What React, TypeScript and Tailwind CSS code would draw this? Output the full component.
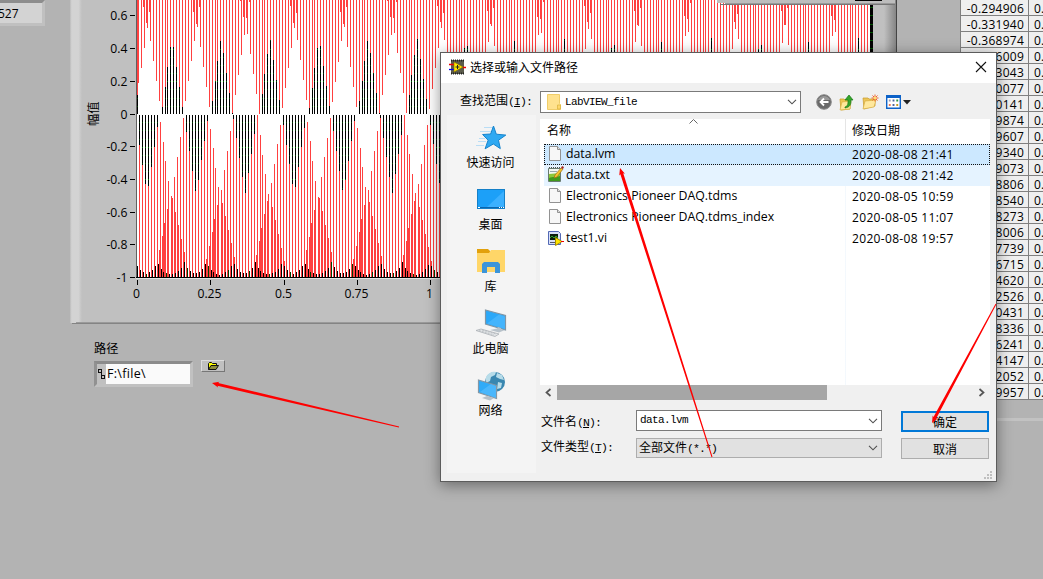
import React from "react";

const PITCH = 2.94;
const PERIOD = 49.02;
const RED = "#ff4040";

const distanceTo = (x: number, origin: number) => {
  const m = (((x - origin) % PERIOD) + PERIOD) % PERIOD;
  return Math.min(m, PERIOD - m);
};

type Bar = { x: number; y: number; w: number; h: number; fill: string };

function buildBars(): Bar[] {
  const bars: Bar[] = [];
  const add = (x: number, y0: number, y1: number, fill: string, w = 1) => {
    const a = Math.round(y0);
    const b = Math.round(y1);
    if (b > a) bars.push({ x, y: a, w, h: b - a, fill });
  };
  const addBlack = (x: number, y0: number, y1: number) => {
    add(x, y0, y1, "#000");
    for (let n = -13; n < 20; n++) {
      const y = Math.round(114 - n * 8.17);
      if (y > y0 && y < y1 - 1) add(x, y, y + 1, n % 4 === 0 ? "#007000" : "#003c00");
    }
  };
  add(137, 0, 95, RED, 1);
  add(138, 0, 83, RED, 1);
  addBlack(137, 95, 114);
  for (let k = 0; k < 248; k++) {
    const fx = 141.5 + PITCH * k;
    const x = Math.floor(fx);
    if (x > 868) break;
    const d = distanceTo(fx, 147.9);
    const t = 24 + 6.82 * d;
    const end = Math.min(t, 228 - t);
    add(x, 0, end, RED);
    if (t > 114) addBlack(x, end, 114);
    const wide = 26 - 5.6 * d;
    if (wide > 0) add(x - 1, 0, wide, RED);
  }
  for (let k = 0; k < 248; k++) {
    const fx = 139.5 + PITCH * k;
    const x = Math.floor(fx);
    if (x > 868) break;
    const t = 195 - 6.67 * distanceTo(fx, 147);
    if (t > 115) {
      addBlack(x, 115, t);
      add(x, t, 277, RED);
    } else {
      add(x, 230 - t, 277, RED);
    }
    const d = distanceTo(fx, 171.6);
    const s = 197 + 4.6 * d;
    if (s < 262) {
      const right = distanceTo(fx + 1, 171.6) > d;
      add(right ? x + 1 : x - 1, s, 277, RED);
    }
  }
  for (let k = 0; k < 248; k++) {
    const fx = 137.5 + PITCH * k;
    const d = Math.min(distanceTo(fx, 157), distanceTo(fx, 184.6));
    add(Math.floor(fx), 276 - 14 * Math.pow(0.86, d * 1.15), 277, k % 7 === 3 ? "#003c00" : "#000");
  }
  return bars;
}

const BARS = buildBars();

const Y_TICKS: [string, number][] = [
  ["0.6", 15], ["0.4", 48], ["0.2", 81], ["0", 114], ["-0.2", 146],
  ["-0.4", 179], ["-0.6", 212], ["-0.8", 244], ["-1", 277],
];
const X_TICKS: [string, number][] = [["0", 137], ["0.25", 210], ["0.5", 284], ["0.75", 357], ["1", 430]];

function Chart() {
  return (
    <svg width="827" height="324" viewBox="70 0 827 324" shapeRendering="crispEdges" className="block">
      <defs>
        <linearGradient id="bevelL"><stop offset="0" stopColor="#bcbcbc" /><stop offset=".15" stopColor="#d3d3d3" /><stop offset=".7" stopColor="#d3d3d3" /><stop offset="1" stopColor="#c0c0c0" /></linearGradient>
        <linearGradient id="bevelR"><stop offset="0" stopColor="#c0c0c0" /><stop offset="1" stopColor="#858585" /></linearGradient>
      </defs>
      <rect x="70" y="0" width="827" height="322" fill="#c0c0c0" />
      <rect x="70" y="0" width="12" height="323" fill="url(#bevelL)" />
      <rect x="884" y="0" width="12" height="323" fill="url(#bevelR)" />
      <rect x="896" y="0" width="1" height="323" fill="#444" />
      <rect x="76" y="322" width="821" height="1" fill="#9a9a9a" />
      <rect x="72" y="323" width="825" height="1" fill="#848484" />
      <rect x="136" y="0" width="1" height="278" fill="#606060" />
      <rect x="137" y="0" width="733" height="277" fill="#fff" />
      {BARS.map((b, i) => (
        <rect key={i} x={b.x} y={b.y} width={b.w} height={b.h} fill={b.fill} />
      ))}
      <rect x="870" y="0" width="3" height="277" fill="#000" />
      {[7, 15, 24, 32, 40, 48].map((y) => <rect key={y} x="870" y={y} width="3" height="1" fill="#005000" />)}
      <rect x="136" y="277" width="737" height="1" fill="#000" />
      <rect x="136" y="278" width="737" height="1" fill="#e2e2e2" />
      {Y_TICKS.map(([label, y]) => (
        <g key={label}>
          <rect x="130" y={y} width="5" height="1" fill="#000" />
          <text x="127.5" y={y + 5} textAnchor="end" fontSize="12.2" fontFamily="Open Sans, sans-serif">{label}</text>
        </g>
      ))}
      {X_TICKS.map(([label, x]) => (
        <g key={label}>
          <rect x={x} y="280" width="1" height="5" fill="#000" />
          <text x={x - 0.5} y="298" textAnchor="middle" fontSize="12.2" fontFamily="Open Sans, sans-serif">{label}</text>
        </g>
      ))}
      <text transform="translate(98 126) rotate(-90)" fontSize="12.2" fontFamily="Noto Sans CJK SC, sans-serif">幅值</text>
      <rect x="717" y="0" width="178" height="3" fill="#bdbdbd" />
      <rect x="725" y="3" width="170" height="1" fill="#999" />
      <rect x="720" y="4" width="175" height="1" fill="#777" />
      <rect x="855" y="0" width="27" height="1" fill="#000" />
    </svg>
  );
}

const TABLE = [
  "-0.294906", "-0.331940", "-0.368974", "-0.406009", "-0.443043", "-0.480077", "-0.510141", "-0.529874", "-0.549607",
  "-0.569340", "-0.589073", "-0.608806", "-0.628540", "-0.648273", "-0.668006", "-0.687739", "-0.706715", "-0.724620",
  "-0.742526", "-0.760431", "-0.778336", "-0.796241", "-0.814147", "-0.832052", "-0.849957",
];

function DataTable() {
  return (
    <div className="flex w-[84px] flex-col">
      <div className="flex flex-col border-l border-l-[#808080] bg-[#efefef]">
        {TABLE.map((v) => (
          <div key={v} className="flex h-4 border-b border-[#808080] text-[12px] leading-[18px] tracking-[0.25px]">
            <div className="w-[68px] shrink-0 border-r border-[#808080] pr-[4px] text-right">{v}</div>
            <div className="pl-[5px]">0.</div>
          </div>
        ))}
      </div>
      <div className="mt-[18px] h-[3px] bg-[#c2c2c2]" />
    </div>
  );
}

function PathControl() {
  return (
    <div className="flex pl-[24px] pt-[17px]">
      <div className="flex w-[99px] flex-col">
        <span className="h-[20px] font-['Noto_Sans_CJK_SC',sans-serif] text-[12.2px] leading-[14px]">路径</span>
        <div className="flex h-[26px] border-[3px] border-b-[#c1c1c1] border-l-[#919191] border-r-[#c1c1c1] border-t-[#8b8b8b] bg-[#fafafa]">
          <div className="flex w-[9px] items-center justify-center bg-[#c0c0c0]">
            <svg width="7" height="11" viewBox="0 0 7 11" fill="none" stroke="#111" shapeRendering="crispEdges"><path d="M.5 .5h3v3h-3zM3.5 3.5v5M3.5 6.5h3v3h-3z" /></svg>
          </div>
          <span className="pl-px text-[12.5px] leading-[20px] tracking-[0.3px]">F:\file\</span>
        </div>
      </div>
      <div className="ml-[8px] mt-[19px] flex h-[12px] w-[24px] items-center justify-center border border-b-[#777] border-l-[#ddd] border-r-[#777] border-t-[#ddd] bg-[#c0c0c0]">
        <svg width="11" height="8" viewBox="0 0 11 8"><path d="M.5 7.5V1.5l1-1h2l1 1h4v2" fill="#ffff00" stroke="#111" /><path d="M.5 7.5l2.5-4h7.5l-2.5 4z" fill="#8c8c3c" stroke="#111" /></svg>
      </div>
    </div>
  );
}

const Chevron = () => (
  <svg width="10" height="6" viewBox="0 0 10 6" fill="none" stroke="#505050" strokeWidth="1.1"><path d="M1 .8l4 4 4-4" /></svg>
);

const StarIcon = () => (
  <svg width="32" height="32" viewBox="0 0 32 32">
    <path d="M9 6.500h10M5 10.500h11M3 20.500h8M1 24.500h8M4 17.500h6" stroke="#b9ddf5" strokeWidth="1" />
    <path d="M18.500 5l2.800 8.200 9.500.9-7.300 5.100 1.800 8.400-7-4.600-8.200 4.800 3-8.600-5.500-5.700 8-.5z" fill="#2fa9f2" stroke="#1583cc" />
  </svg>
);
const DesktopIcon = () => (
  <svg width="32" height="32" viewBox="0 0 32 32">
    <rect x="2.500" y="6.500" width="27" height="19" fill="#1ca0f8" stroke="#1580c8" />
    <path d="M12 24L29 8v16z" fill="#3bb0ff" /><path d="M3 24.500h26" stroke="#0b65ad" /><path d="M3 24.500h2M24 24.500h1M26 24.500h1M28 24.500h1" stroke="#fff" />
  </svg>
);
const LibraryIcon = () => (
  <svg width="32" height="32" viewBox="0 0 32 32">
    <path d="M2 4h11l2 2v4H2z" fill="#e2a10c" /><path d="M2 8h12l2-3h14v22H2z" fill="#ffd668" />
    <path d="M7 28V19l2-2h14l2 2v9h-5v-6h-8v6z" fill="#3c95da" />
  </svg>
);
const ComputerIcon = () => (
  <svg width="32" height="32" viewBox="0 0 32 32">
    <path d="M10.500 3l20 5.500v14.500l-20-6z" fill="#2ba8f8" stroke="#8095a5" strokeWidth="1.2" /><path d="M12 16.500L24 7.500l6 2v12.500z" fill="#55bcff" opacity=".6" />
    <path d="M15 23l7-1.500 1-1.500 3 1v1.500l4 .5-6 2.500z" fill="#b8c2ca" /><path d="M1 23.500l5-1.500 18 5-4 2.500z" fill="#e3e6e8" stroke="#a9afb4" strokeWidth=".8" /><path d="M4 23.500l15 4.500M7 23l14 4" stroke="#a9afb4" strokeWidth=".6" strokeDasharray="2 1" />
  </svg>
);
const NetworkIcon = () => (
  <svg width="32" height="32" viewBox="0 0 32 32">
    <circle cx="20" cy="13" r="10" fill="#3987b0" /><path d="M11 8c2-4 6-6 10-5l-1 3-4 2-1 4-4 2zM22 4l5 2 2 5-4-1-4-2zM23 13l4 1-1 5-4 1z" fill="#b7dce9" />
    <path d="M3.500 11l18 5.500v13l-18-6z" fill="#2fabf8" stroke="#8497a5" strokeWidth="1.200" /><path d="M5 23l11-8 5 2v12z" fill="#5ec0ff" opacity=".6" /><path d="M7 29l5-2 7 2-4 2.500z" fill="#b6c0c8" />
  </svg>
);

const PLACES = [
  { label: "快速访问", icon: <StarIcon /> },
  { label: "桌面", icon: <DesktopIcon /> },
  { label: "库", icon: <LibraryIcon /> },
  { label: "此电脑", icon: <ComputerIcon /> },
  { label: "网络", icon: <NetworkIcon /> },
];

const PageIcon = () => (
  <svg width="16" height="17" viewBox="0 0 16 17"><path d="M2.500 1.500h8l3 3v11h-11z" fill="#f7f7f7" stroke="#929292" /><path d="M10.500 1.500v3h3" fill="#ddd" stroke="#929292" /></svg>
);
const NoteIcon = () => (
  <svg width="17" height="17" viewBox="0 0 17 17">
    <path d="M1.500 2.500h12v13h-12z" fill="#f3f7f0" stroke="#687b70" /><path d="M2 1.500h11" stroke="#555" strokeDasharray="1 1" /><path d="M3 5.500h7" stroke="#9aa" />
    <path d="M2 8l11-1v8H2z" fill="#8cc838" /><path d="M2 12c4-2 6 0 11-2v5H2z" fill="#3f9a1c" />
    <path d="M7 12l1-3 6-7 2 1-6 8z" fill="#f6c32c" stroke="#9a6c17" strokeWidth=".7" /><path d="M14 2l1-2 2 1-1 2z" fill="#a32727" />
  </svg>
);
const ViIcon = () => (
  <svg width="17" height="16" viewBox="0 0 17 16">
    <path d="M1.500 1.500h10l2 2v11h-12z" fill="#d8e0f8" stroke="#5369b5" /><rect x="3" y="4" width="8" height="6" fill="#0d1d0d" /><path d="M3 8l2-2 2 2 2-2 2 2" stroke="#2ba32b" fill="none" />
    <path d="M3 12.500h6" stroke="#556" /><path d="M8.500 7.500l6.500 4-6.500 4z" fill="#ffe500" stroke="#a68a00" /><path d="M14 11.500h3" stroke="#e00" />
  </svg>
);

const FILES = [
  { name: "data.lvm", date: "2020-08-08 21:41", icon: <PageIcon />, row: "bg-[#cce8ff] outline-1 -outline-offset-1 outline-dotted outline-[#111]" },
  { name: "data.txt", date: "2020-08-08 21:42", icon: <NoteIcon />, row: "bg-[#e5f3ff]" },
  { name: "Electronics Pioneer DAQ.tdms", date: "2020-08-05 10:59", icon: <PageIcon />, row: "" },
  { name: "Electronics Pioneer DAQ.tdms_index", date: "2020-08-05 11:07", icon: <PageIcon />, row: "" },
  { name: "test1.vi", date: "2020-08-08 19:57", icon: <ViIcon />, row: "" },
];

function Toolbar() {
  return (
    <div className="ml-[15px] flex items-center">
      <svg width="16" height="16" viewBox="0 0 16 16"><circle cx="8" cy="8" r="7.300" fill="#6a6a6a" stroke="#8a8a8a" /><path d="M2 6a6.500 6.500 0 0 1 12 0z" fill="#999" /><path d="M12.500 8H5M8 4.500L4.500 8 8 11.500" stroke="#fff" strokeWidth="1.800" fill="none" /></svg>
      <svg width="16" height="17" viewBox="0 0 16 17" className="ml-[7px]"><path d="M1 5h4l1 1h5v9l-9 1z" fill="#edc64f" stroke="#cfa22b" strokeWidth=".8" /><path d="M1 16l2-8 9-1-1 8z" fill="#ffe89a" stroke="#d4aa3c" strokeWidth=".6" /><path d="M6 13c3-1 3-3 3-7H6l4-5 4 5h-2c0 5-1 7-6 8z" fill="#35a52b" stroke="#187915" strokeWidth=".7" /></svg>
      <svg width="17" height="16" viewBox="0 0 17 16" className="ml-[7px]"><path d="M1 4h5l1 1h6v7l-11 3z" fill="#ecc557" stroke="#c89b2d" strokeWidth=".7" /><path d="M1 15l2-8 11-1-2 7z" fill="#ffe89d" stroke="#d1a638" strokeWidth=".6" /><path d="M13 .5v7M9.500 4h7M10.500 1.500l5 5M15.500 1.500l-5 5" stroke="#ef642e" /><circle cx="13" cy="4" r="1.300" fill="#ffe36e" /></svg>
      <svg width="15" height="14" viewBox="0 0 16 14" preserveAspectRatio="none" className="ml-[7px]"><rect x=".75" y=".75" width="14.500" height="12.500" fill="#fff" stroke="#0c62c8" strokeWidth="1.500" /><path d="M0 1.500h16" stroke="#0c62c8" strokeWidth="3" /><path d="M3 5.500h2" stroke="#999db8" strokeWidth="2" /><path d="M3 10h2" stroke="#f07850" strokeWidth="2" /><path d="M7 5.500h2M7 10h2" stroke="#4c659e" strokeWidth="2" /><path d="M11 5.500h2" stroke="#229447" strokeWidth="2" /><path d="M11 10h2" stroke="#c29e20" strokeWidth="2" /></svg>
      <svg width="8" height="5" viewBox="0 0 8 5" className="ml-[2px]"><path d="M0 0h8L4 4.500z" fill="#222" /></svg>
    </div>
  );
}

const MONO = "font-['Liberation_Mono',monospace] text-[11.5px] tracking-[-0.9px]";

function FileDialog() {
  return (
    <div className="absolute left-[440px] top-[52px] flex h-[430px] w-[557px] flex-col border border-[#5c5c5c] bg-[#f0f0f0] font-['Noto_Sans_CJK_SC',sans-serif] text-[12px] shadow-[0_3px_14px_rgba(0,0,0,0.42)]">
      <div className="flex h-[30px] shrink-0 items-center bg-white pl-[8px] pr-[9px]">
        <svg width="17" height="16" viewBox="0 0 17 16" className="-mt-[3px]"><rect x="2" y="1" width="13" height="14" fill="#5c5c4c" /><path d="M2 1.500h13M2 14.500h13" stroke="#222" strokeWidth="2" strokeDasharray="1 1" /><path d="M0 5.500h5M14 8.500h3" stroke="#e00" strokeWidth="1.300" /><path d="M0 10.500h5" stroke="#00e" strokeWidth="1.300" /><path d="M5 3l9 5-9 5z" fill="#ffe600" stroke="#886a00" strokeWidth=".6" /><path d="M6.500 8h4M8.500 6v4" stroke="#222" /></svg>
        <span className="-mt-[2px] ml-[4px] text-[12px] leading-[18px]">选择或输入文件路径</span>
        <svg width="12" height="12" viewBox="0 0 12 12" className="-mt-[2px] ml-auto" stroke="#111" strokeWidth="1.100"><path d="M1 1l10 10M11 1L1 11" /></svg>
      </div>
      <div className="flex h-[35px] shrink-0 items-center pl-[19px] pt-[3px]">
        <div className="-mt-[3px] w-[80px] leading-[18px]">查找范围<span className={MONO}>(<u>I</u>):</span></div>
        <div className="flex h-[22px] w-[261px] items-center border border-[#7a7a7a] bg-white pl-[6px] pr-[3px]">
          <svg width="14" height="16" viewBox="0 0 14 16"><path d="M.5.500h12v9l1 1v5H.5z" fill="#ffe28e" stroke="#f0cd69" /><path d="M10.500 15v-4h3v4z" fill="#ffd76b" stroke="#d9b13c" strokeWidth=".7" /></svg>
          <span className="ml-[4px] font-['Liberation_Mono',monospace] text-[11px] tracking-[-0.6px]">LabVIEW_file</span>
          <div className="ml-auto"><Chevron /></div>
        </div>
        <Toolbar />
      </div>
      <div className="flex min-h-0 grow">
        <div className="ml-[6px] flex h-[358px] w-[89px] shrink-0 -translate-y-[3px] flex-col bg-[#f4f4f4] pr-[2px] pt-[6px]">
          {PLACES.map((p) => (
            <div key={p.label} className="flex h-[62px] shrink-0 flex-col items-center">
              {p.icon}
              <span className="mt-[1px] leading-[16px]">{p.label}</span>
            </div>
          ))}
        </div>
        <div className="ml-[4px] flex w-[450px] flex-col">
          <div className="mt-px flex h-[266px] shrink-0 flex-col bg-white">
            <div className="flex h-[25px] shrink-0">
              <div className="flex w-[306px] border-r border-[#e5e5e5] pl-[7px] leading-[22px]">
                名称
                <svg width="9" height="5" viewBox="0 0 9 5" className="ml-[118px]" fill="none" stroke="#666"><path d="M.5 4.500l4-4 4 4" /></svg>
              </div>
              <span className="pl-[6px] leading-[22px]">修改日期</span>
            </div>
            <div className="flex grow flex-col bg-linear-to-r from-transparent from-[305px] via-[#e8f2fb] via-[305px] to-transparent to-[306px] font-['Open_Sans',sans-serif]">
              {FILES.map((f) => (
                <div key={f.name} className={`ml-[4px] flex h-[21px] items-center ${f.row}`}>
                  <div className="ml-[3px] w-[18px] -translate-y-px">{f.icon}</div>
                  <span className="w-[284px] whitespace-nowrap pl-px text-[12.3px]">{f.name}</span>
                  <span className="whitespace-nowrap pl-[3px] text-[12px] tracking-[0.33px]">{f.date}</span>
                </div>
              ))}
            </div>
          </div>
          <div className="flex h-[15px] shrink-0 items-center">
            <svg width="17" height="9" viewBox="0 0 17 9" fill="none" stroke="#555" strokeWidth="1.700"><path d="M10.500 1L6.500 4.500l4 3.500" /></svg>
            <div className="h-[15px] w-[270px] bg-[#a6a6a6]" />
            <svg width="17" height="9" viewBox="0 0 17 9" fill="none" stroke="#555" strokeWidth="1.700" className="ml-auto"><path d="M6.500 1l4 3.500-4 3.500" /></svg>
          </div>
          <div className="mt-[9px] flex">
            <div className="flex w-[96px] flex-col gap-[6px] pl-[1px]">
              <span className="h-[21px] pt-[2px] leading-[20px]">文件名<span className={MONO}>(<u>N</u>):</span></span>
              <span className="h-[21px] leading-[20px]">文件类型<span className={MONO}>(<u>T</u>):</span></span>
            </div>
            <div className="flex w-[246px] flex-col gap-[7px] pt-px">
              <div className="flex h-[21px] items-center border border-[#7a7a7a] bg-white pl-[3px] pr-[3px]">
                <span className="font-['Liberation_Mono',monospace] text-[11px] tracking-[-0.6px]">data.lvm</span>
                <div className="ml-auto"><Chevron /></div>
              </div>
              <div className="flex h-[20px] items-center border border-[#adadad] bg-[#e1e1e1] pl-[2px] pr-[3px]">
                <span>全部文件<span className={MONO}>(*.*)</span></span>
                <div className="ml-auto"><Chevron /></div>
              </div>
            </div>
            <div className="ml-[19px] flex w-[88px] flex-col gap-[6px] pt-[2px]">
              <button className="h-[21px] border-2 border-[#0078d7] bg-[#e1e1e1] leading-[16px]">确定</button>
              <button className="h-[21px] border border-[#adadad] bg-[#e1e1e1] leading-[18px]">取消</button>
            </div>
          </div>
        </div>
      </div>
      <svg width="9" height="9" viewBox="0 0 9 9" className="absolute bottom-px right-[3px]" fill="#bfbfbf"><path d="M6 0h2v2H6zM3 3h2v2H3zM6 3h2v2H6zM0 6h2v2H0zM3 6h2v2H3zM6 6h2v2H6z" /></svg>
    </div>
  );
}

function Arrow({ tip, tail }: { tip: [number, number]; tail: [number, number] }) {
  const dx = tail[0] - tip[0];
  const dy = tail[1] - tip[1];
  const len = Math.hypot(dx, dy);
  const at = (along: number, side: number) =>
    `${tip[0] + (dx / len) * along - (dy / len) * side},${tip[1] + (dy / len) * along + (dx / len) * side}`;
  const points = [at(0, 0), at(7, 3), at(6, 1.5), at(len, 0.5), at(len, -0.5), at(6, -1.5), at(7, -3)].join(" ");
  return <polygon points={points} fill="#fe0000" />;
}

export default function App() {
  return (
    <div className="relative flex h-[579px] w-[1043px] overflow-hidden bg-[#b3b3b3] font-['Open_Sans',sans-serif] text-black">
      <div className="w-[70px] shrink-0">
        <div className="h-[26px] w-[45px] border-b-[3px] border-r-[3px] border-t-[3px] border-b-[#c0c0c0] border-r-[#c0c0c0] border-t-[#8d8d8d] bg-[#d3d3d3] text-[12px] leading-[21px]"><span className="-ml-[2px]">527</span></div>
      </div>
      <div className="flex w-[827px] shrink-0 flex-col">
        <Chart />
        <PathControl />
      </div>
      <div className="ml-[63px] shrink-0"><DataTable /></div>
      <FileDialog />
      <svg width="1043" height="579" viewBox="0 0 1043 579" className="pointer-events-none absolute inset-0">
        <Arrow tip={[212, 383]} tail={[399, 427]} />
        <Arrow tip={[620, 168]} tail={[712, 457]} />
        <Arrow tip={[932, 423]} tail={[996, 304]} />
      </svg>
    </div>
  );
}
